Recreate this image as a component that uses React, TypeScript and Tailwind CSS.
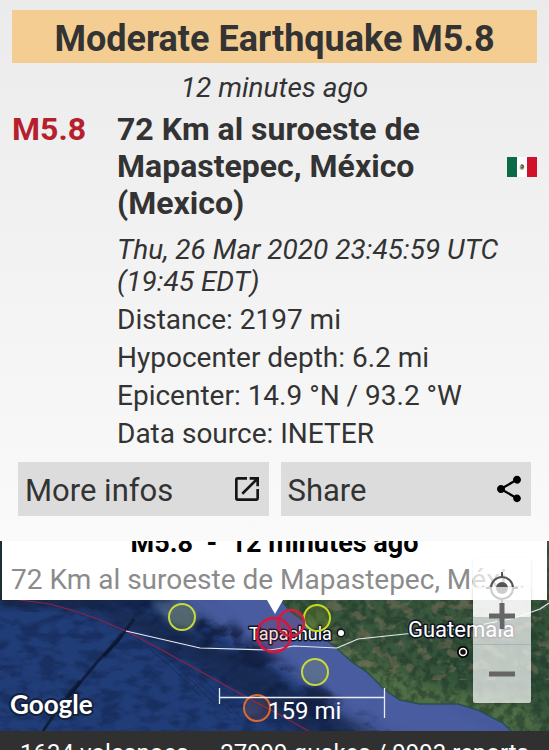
import { MdOpenInNew, MdShare } from "react-icons/md";

const details = [
  "Distance: 2197 mi",
  "Hypocenter depth: 6.2 mi",
  "Epicenter: 14.9 °N / 93.2 °W",
  "Data source: INETER",
];

const quakes = [
  { x: 182, y: 76, r: 13, color: "#c6d93a", width: 2 },
  { x: 317, y: 77, r: 13, color: "#c6d91e", width: 2 },
  { x: 315, y: 131, r: 13, color: "#c6d93a", width: 2 },
  { x: 257, y: 167, r: 13, color: "#dd6a2c", width: 2 },
  { x: 291, y: 82, r: 13, color: "#d0203f", width: 2.5 },
  { x: 274, y: 94, r: 17, color: "#dc1438", width: 2.5 },
];

function MexicoFlag() {
  return (
    <svg viewBox="0 0 30 20" className="w-[30px] h-5 shrink-0" role="img" aria-label="Mexico">
      <rect width="30" height="20" fill="#fff" />
      <rect width="10" height="20" fill="#0b6b47" />
      <rect x="20" width="10" height="20" fill="#d0132a" />
      <path d="M12.6 9.2c.8-1.8 3.4-2 4.4-.6.8 1.6 0 3.6-1.6 3.8-1.5.2-2.8-1-2.6-2.2" fill="#a39a74" />
      <path d="M14 8.2c1.2-.8 2.6.2 2.2 1.6-.3 1-1.2 1.2-1.8.8" fill="none" stroke="#5c4a2c" strokeWidth="1.2" />
      <path d="M12.8 11.2c.8 1.4 3 1.5 4 .2" fill="none" stroke="#7f9a72" strokeWidth=".8" />
    </svg>
  );
}

function SatelliteMap() {
  return (
    <svg
      viewBox="0 0 549 190"
      preserveAspectRatio="xMidYMid slice"
      className="absolute inset-0 w-full h-full"
      fontFamily="Roboto, sans-serif"
    >
      <defs>
        <filter id="seaRelief" x="0" y="0" width="100%" height="100%" colorInterpolationFilters="sRGB">
          <feTurbulence type="fractalNoise" baseFrequency="0.03 0.04" numOctaves="6" seed="8" result="n" />
          <feColorMatrix in="n" type="matrix" values="0 0 0 0 0.06  0 0 0 0 0.11  0 0 0 0 0.24  5 0 0 0 -2.3" />
        </filter>
        <filter id="seaFloor" x="0" y="0" width="100%" height="100%" colorInterpolationFilters="sRGB">
          <feTurbulence type="fractalNoise" baseFrequency="0.05 0.1" numOctaves="5" seed="14" result="n" />
          <feColorMatrix in="n" type="matrix" values="0 0 0 0 0.06  0 0 0 0 0.13  0 0 0 0 0.28  4 0 0 0 -1.7" />
        </filter>
        <filter id="landRelief" x="0" y="0" width="100%" height="100%" colorInterpolationFilters="sRGB">
          <feTurbulence type="fractalNoise" baseFrequency="0.12" numOctaves="5" seed="3" result="n" />
          <feColorMatrix in="n" type="matrix" values="0 0 0 0 0.12  0 0 0 0 0.2  0 0 0 0 0.15  4 0 0 0 -1.6" />
        </filter>
        <filter id="landDust" x="0" y="0" width="100%" height="100%" colorInterpolationFilters="sRGB">
          <feTurbulence type="fractalNoise" baseFrequency="0.07 0.1" numOctaves="5" seed="21" result="n" />
          <feColorMatrix in="n" type="matrix" values="0 0 0 0 0.5  0 0 0 0 0.45  0 0 0 0 0.36  0 6 0 0 -3.1" />
        </filter>
        <filter id="soft" x="-20%" y="-20%" width="140%" height="140%">
          <feGaussianBlur stdDeviation="6" />
        </filter>
        <filter id="soft2" x="-20%" y="-20%" width="140%" height="140%">
          <feGaussianBlur stdDeviation="3" />
        </filter>
        <clipPath id="land">
          <path d="M281 59 L290 70 L305 81 L335 106 L352 121 L368 132 L385 149 L400 159 L420 163 L458 163 L478 169 L503 182 L511 190 H549 V0 H281Z" />
        </clipPath>
        <mask id="slope">
          <path d="M110 55 H170 L240 85 L285 125 L345 155 L400 195 H290 L215 140 L150 95Z" fill="#fff" filter="url(#soft)" />
        </mask>
      </defs>

      <rect width="549" height="190" fill="#213d78" />
      <rect width="549" height="190" filter="url(#seaFloor)" opacity=".45" />
      <rect width="8" height="60" fill="#1b2f35" />

      {/* continental shelf and the trench beside it */}
      <path d="M140 40 L200 75 L250 110 L320 155 L360 200 L560 200 L560 0 L130 0Z" fill="#475a9c" filter="url(#soft)" />
      <path d="M115 62 L165 75 L215 105 L262 122 L300 155 L385 195 L300 195 L240 150 L150 98 L80 66Z" fill="#16264a" opacity=".75" filter="url(#soft)" />
      <path d="M0 56 H130 L100 68 L0 66Z" fill="#14233f" opacity=".8" filter="url(#soft2)" />
      <g mask="url(#slope)">
        <rect width="549" height="190" filter="url(#seaRelief)" opacity=".8" />
      </g>
      <path d="M215 50 H290 L385 150 L440 165 L500 195 H420 L360 170 L320 140 L285 112 L250 92Z" fill="#4a5da0" opacity=".9" filter="url(#soft2)" />
      <path d="M150 62 L175 58 L200 72 L192 90 L172 84Z" fill="#5c7596" opacity=".6" filter="url(#soft2)" />
      <path d="M134 78 L118 100 L98 120 L88 132 L72 152 L58 168 L43 190" fill="none" stroke="#0e1a35" strokeWidth="3" opacity=".85" />
      <path d="M122 93 L104 115 M80 140 L66 157" fill="none" stroke="#0a142b" strokeWidth="4" opacity=".6" />
      <path
        d="M137 97 L170 125 L200 155 M145 99 L180 128 L212 160 M152 102 L190 134 L222 164 M160 106 L198 138 L232 172 M170 110 L210 145 L242 178"
        fill="none"
        stroke="#15264c"
        strokeWidth="1"
        opacity=".6"
      />

      <g clipPath="url(#land)">
        <rect width="549" height="190" fill="#38573d" />
        <path d="M281 59 L335 98 L390 128 L430 145 L520 160 L549 190 H500 L400 165 L300 90Z" fill="#557549" opacity=".8" filter="url(#soft)" />
        <path d="M430 108 L549 70 V155 L460 140Z" fill="#284934" opacity=".6" filter="url(#soft)" />
        <rect width="549" height="190" filter="url(#landRelief)" opacity=".5" />
        <rect x="325" y="59" width="224" height="80" filter="url(#landDust)" opacity=".5" />
      </g>
      <path
        d="M281 59 L290 70 L305 81 L335 106 L352 121 L368 132 L385 149 L400 159 L420 163 L458 163 L478 169 L503 182 L511 190"
        fill="none"
        stroke="#274f50"
        strokeWidth="1.5"
      />

      {/* plate boundary */}
      <path d="M20 59 L50 63 L78 71 L100 79 L128 91 L160 108 L205 133 L250 158 L280 174 L312 192" fill="none" stroke="#8c2247" strokeWidth="1.2" />
      <path d="M126 90 L200 107 L270 109 L294 105 L337 107 L358 98 L405 93 L460 88 L515 77 L540 68 L549 62" fill="none" stroke="#e6e9ee" strokeWidth="1.2" />

      <g fill="#fff" stroke="#10151f" strokeWidth="3" strokeLinejoin="round" paintOrder="stroke">
        <text x="249" y="99" fontSize="18">Tapachula</text>
        <text x="408" y="96" fontSize="22">Guatemala</text>
        <circle cx="341" cy="92" r="3" />
      </g>
      <circle cx="463" cy="111" r="4" fill="#111" stroke="#000" strokeWidth="4" />
      <circle cx="463" cy="111" r="3.5" fill="#111" stroke="#fff" strokeWidth="1.5" />

      {quakes.map((q) => (
        <circle key={`${q.x}-${q.y}`} cx={q.x} cy={q.y} r={q.r} fill={q.color} fillOpacity=".14" stroke={q.color} strokeWidth={q.width} />
      ))}

      <path d="M219.5 147 V163 M219 156.5 H385 M384.5 147 V177" fill="none" stroke="#e8ecf4" strokeWidth="1.3" />
      <text x="268" y="178" fontSize="24" fill="#fff">159 mi</text>

      <text x="10" y="173" fontSize="26" fontWeight="700" fontFamily="Lato, sans-serif" fill="#fff" stroke="#14203c" strokeWidth="4" strokeLinejoin="round" paintOrder="stroke">
        Google
      </text>
    </svg>
  );
}

function MapControls() {
  return (
    <div className="absolute top-[17px] right-[18px] w-[58px] flex flex-col">
      <button aria-label="My location" className="h-[59px] flex items-center justify-center rounded-xs bg-white/70 shadow">
        <svg viewBox="0 0 32 32" className="size-8" fill="none" stroke="#555" strokeWidth="2">
          <circle cx="16" cy="16" r="11" />
          <circle cx="16" cy="16" r="6" fill="#555" stroke="none" />
          <path d="M16 0v6M16 26v6M0 16h6M26 16h6" />
        </svg>
      </button>
      <div className="relative -mt-[30px] flex flex-col rounded-xs bg-white/70 shadow divide-y divide-gray-400/60">
        <button aria-label="Zoom in" className="h-[58px] flex items-center justify-center">
          <svg viewBox="0 0 26 26" className="size-[26px]" stroke="#666" strokeWidth="5">
            <path d="M13 0v26M0 13h26" />
          </svg>
        </button>
        <button aria-label="Zoom out" className="h-[58px] flex items-center justify-center">
          <svg viewBox="0 0 26 26" className="size-[26px]" stroke="#666" strokeWidth="5">
            <path d="M0 13h26" />
          </svg>
        </button>
      </div>
    </div>
  );
}

export default function App() {
  return (
    <div className="h-screen flex flex-col overflow-hidden bg-[#303030] font-['Roboto',sans-serif] text-[#333]">
      <main className="shrink-0 bg-linear-to-b from-[#ebebeb] to-[#fafafa] pt-[10px] pb-[25px]">
        <div className="px-3">
          <h1 className="bg-[#f4cd92] pt-2 pb-[3px] text-center text-[36px] leading-[42px] font-bold">
            Moderate Earthquake M5.8
          </h1>
          <p className="mt-2 text-center text-[28px] leading-[33px] italic">12 minutes ago</p>

          <div className="mt-[7px] flex">
            <div className="w-[105px] shrink-0 text-[32px] leading-[37px] font-bold text-[#b51f2e]">M5.8</div>
            <div className="flex-1 min-w-0">
              <div className="flex items-center justify-between">
                <h2 className="max-w-[340px] text-[32px] leading-[37px] font-bold">
                  72 Km al suroeste de Mapastepec, México (Mexico)
                </h2>
                <MexicoFlag />
              </div>
              <p className="mt-3 text-[28px] leading-8 italic">
                Thu, 26 Mar 2020 23:45:59 UTC (19:45 EDT)
              </p>
              <ul className="mt-[3px] text-[28px] leading-[38px]">
                {details.map((line) => (
                  <li key={line}>{line}</li>
                ))}
              </ul>
            </div>
          </div>
        </div>

        <div className="mt-[9px] flex gap-3 px-[18px] text-[31px]">
          <button className="flex-1 h-[54px] pt-1 pl-[7px] pr-[6px] flex items-center justify-between bg-[#dcdcdc]">
            More infos
            <MdOpenInNew size={32} className="mb-1 text-[#151515]" />
          </button>
          <button className="flex-1 h-[54px] pt-1 pl-[7px] pr-[6px] flex items-center justify-between bg-[#dcdcdc]">
            Share
            <MdShare size={32} className="mb-1 text-black" />
          </button>
        </div>
      </main>

      <section className="relative h-[190px] shrink-0 overflow-hidden bg-[#22407a]">
        <SatelliteMap />
        <div className="absolute bottom-[131px] inset-x-[2px] bg-white px-[9px] pb-1">
          <div className="text-center text-[27px] leading-8 font-bold text-black whitespace-pre">{"M5.8  -  12 minutes ago"}</div>
          <div className="mt-1 text-[28px] leading-[33px] text-[#8b8b8b] truncate">
            72 Km al suroeste de Mapastepec, México (Mexico)
          </div>
          <svg viewBox="0 0 16 14" className="absolute top-full left-1/2 -ml-2 w-4 h-[14px]">
            <path d="M0 0H16L8 14Z" fill="#fff" />
          </svg>
        </div>
        <MapControls />
      </section>

      <footer className="shrink-0 px-5 pt-2 flex justify-between text-2xl leading-7 whitespace-nowrap text-white">
        <span>1634 volcanoes</span>
        <span>27999 quakes / 9993 reports</span>
      </footer>
    </div>
  );
}
